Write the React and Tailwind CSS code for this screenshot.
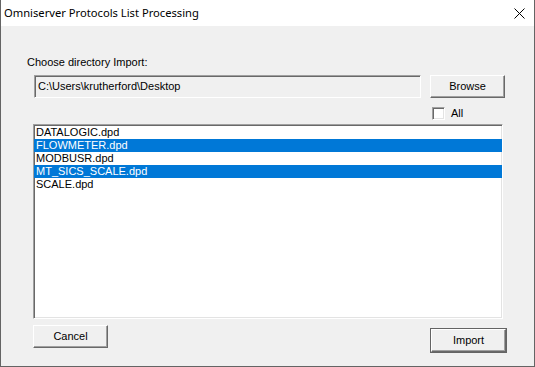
const items = [
  { name: "DATALOGIC.dpd", selected: false },
  { name: "FLOWMETER.dpd", selected: true },
  { name: "MODBUSR.dpd", selected: false },
  { name: "MT_SICS_SCALE.dpd", selected: true },
  { name: "SCALE.dpd", selected: false },
]

function Button({ children, className = "" }) {
  return (
    <div
      className={`w-[75px] h-[23px] flex items-center justify-center bg-[#f0f0f0] border border-t-white border-l-white border-b-[#696969] border-r-[#696969] shadow-[inset_-1px_-1px_0_#a0a0a0] text-[11px] text-black ${className}`}
    >
      {children}
    </div>
  )
}

export default function App() {
  return (
    <div
      className="w-[535px] h-[367px] flex flex-col bg-[#f0f0f0] border-l border-r border-b border-[#646464]"
      style={{ fontFamily: '"Liberation Sans", Arial, sans-serif' }}
    >
      {/* Title bar */}
      <div className="h-[26px] bg-white flex items-center justify-between shrink-0">
        <span
          className="pl-[3px] text-[11.2px] text-black"
          style={{ fontFamily: '"Noto Sans", "Liberation Sans", sans-serif' }}
        >
          Omniserver Protocols List Processing
        </span>
        <svg width="11" height="11" viewBox="0 0 11 11" className="mr-[9px]">
          <path d="M0.5 0.5 L10.5 10.5 M10.5 0.5 L0.5 10.5" stroke="#000" strokeWidth="1" fill="none" />
        </svg>
      </div>

      {/* Body */}
      <div className="flex flex-col flex-1">
        <p className="mt-[30px] ml-[26px] text-[11px] leading-[13px] text-black">
          Choose directory Import:
        </p>

        <div className="mt-[6px] ml-[33px] flex items-start">
          <div className="w-[387px] h-[23px] flex items-center pl-[3px] bg-[#f0f0f0] border border-t-[#a0a0a0] border-l-[#a0a0a0] border-b-white border-r-white shadow-[inset_1px_1px_0_#696969] text-[11px] text-black">
            C:\Users\krutherford\Desktop
          </div>
          <Button className="ml-[9px]">Browse</Button>
        </div>

        <div className="mt-[9px] ml-[431px] flex items-center">
          <div className="w-[13px] h-[13px] bg-white border border-t-[#a0a0a0] border-l-[#a0a0a0] border-b-white border-r-white shadow-[inset_1px_1px_0_#696969,inset_-1px_-1px_0_#e3e3e3]" />
          <span className="ml-[6px] text-[11px] leading-[13px] text-black">All</span>
        </div>

        <div className="mt-[4px] ml-[32px] w-[470px] h-[195px] bg-white border border-t-[#a0a0a0] border-l-[#a0a0a0] border-b-white border-r-white shadow-[inset_1px_1px_0_#696969,inset_-1px_-1px_0_#e3e3e3] pt-[1px]">
          {items.map((it) => (
            <div
              key={it.name}
              className={`h-[13px] leading-[13px] pl-[2px] text-[11px] ${
                it.selected ? "bg-[#0078d7] text-white" : "text-black"
              }`}
            >
              {it.name}
            </div>
          ))}
        </div>

        <div className="flex items-start ml-[32px]">
          <Button className="mt-[6px]">Cancel</Button>
          <div className="mt-[9px] ml-[322px] border border-[#646464]">
            <Button className="w-[73px] h-[22px]">Import</Button>
          </div>
        </div>
      </div>
    </div>
  )
}
